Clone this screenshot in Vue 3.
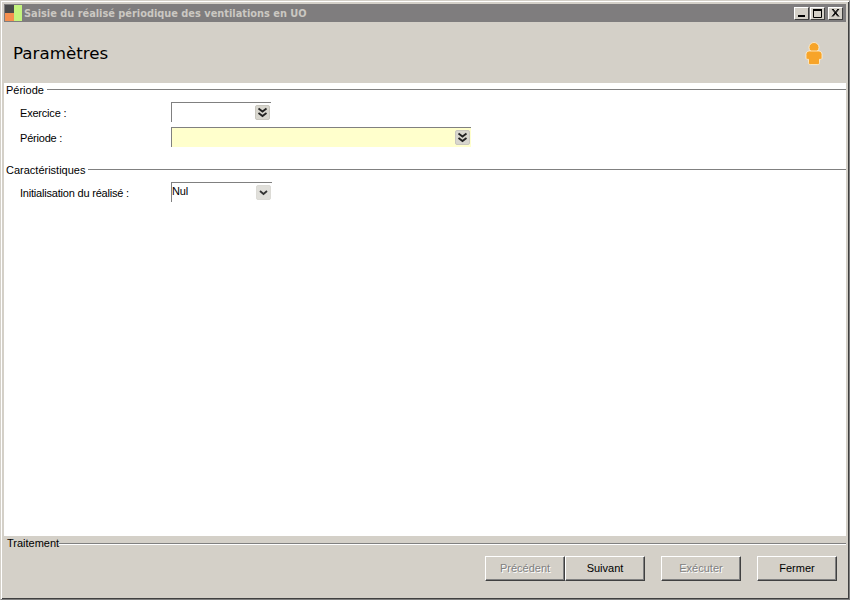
<script setup>
const sections = [
  { title: 'Période', rows: [
    { label: 'Exercice :', w: 100, icon: 'double' },
    { label: 'Période :', w: 300, icon: 'double', req: true },
  ]},
  { title: 'Caractéristiques', rows: [
    { label: 'Initialisation du réalisé :', w: 101, icon: 'single', value: 'Nul' },
  ]},
]
</script>

<template>
  <div class="win">
    <div class="titlebar">
      <svg class="logo" width="17" height="16" viewBox="0 0 17 16">
        <rect x="0" y="0" width="9" height="8" fill="#4a4a4a" />
        <rect x="0" y="8" width="9" height="8" fill="#f58f4f" />
        <rect x="9" y="0" width="8" height="16" fill="#c4f47e" />
      </svg>
      <span class="title">Saisie du réalisé périodique des ventilations en UO</span>
      <div class="ctrls">
        <button class="ctl ctl-min"><svg width="13" height="11" viewBox="0 0 13 11"><rect x="3" y="7" width="7" height="2" fill="#000" /></svg></button>
        <button class="ctl"><svg width="13" height="11" viewBox="0 0 13 11"><path d="M2.500 1.500h8v8h-8z" fill="none" stroke="#000" /><rect x="2" y="1" width="9" height="2" fill="#000" /></svg></button>
        <button class="ctl ctl-x"><svg width="13" height="11" viewBox="0 0 13 11"><path d="M3 1l6 7.500M4 1l6 7.500M9 1l-6 7.500M10 1l-6 7.500" stroke="#000" fill="none" /></svg></button>
      </div>
    </div>

    <div class="header">
      <h1>Paramètres</h1>
      <svg class="person" width="18" height="24" viewBox="0 0 18 24">
        <circle cx="9" cy="5.500" r="5" fill="#f7a429" stroke="#fff3d8" stroke-width="0.8" />
        <path d="M4.200 9h9.600c1.800 0 3.200 1.500 3.200 3.300v3.700c0 .9-.6 1.300-1.500 1.300h-1v3.500c0 1-.7 1.800-1.700 1.800h-7.600c-1 0-1.700-.8-1.700-1.800v-3.500h-1c-.9 0-1.500-.4-1.500-1.300v-3.700c0-1.800 1.400-3.300 3.200-3.300z" fill="#f7a429" stroke="#fff3d8" stroke-width="0.8" />
      </svg>
    </div>

    <div class="content">
      <section v-for="s in sections" :key="s.title" class="section">
        <div class="legend"><span>{{ s.title }}</span><i></i></div>
        <div v-for="r in s.rows" :key="r.label" class="row">
          <label>{{ r.label }}</label>
          <div class="field" :class="{ req: r.req }" :style="{ width: r.w + 'px' }">
            <span class="val">{{ r.value }}</span>
            <span class="drop" :class="{ light: r.icon === 'single' }">
              <svg v-if="r.icon === 'double'" width="11" height="11" viewBox="0 0 11 11"><path d="M1.500 1.500l4 3 4-3M1.500 6l4 3 4-3" fill="none" stroke="#222" stroke-width="1.800" /></svg>
              <svg v-else width="11" height="11" viewBox="0 0 11 11"><path d="M2 4l3.500 3 3.500-3" fill="none" stroke="#333" stroke-width="1.800" /></svg>
            </span>
          </div>
        </div>
      </section>
    </div>

    <div class="footer">
      <div class="legend foot-legend"><span>Traitement</span><i></i></div>
      <div class="actions">
        <div class="pair">
          <button class="btn" disabled>Précédent</button>
          <button class="btn">Suivant</button>
        </div>
        <button class="btn" disabled>Exécuter</button>
        <button class="btn">Fermer</button>
      </div>
    </div>
  </div>
</template>

<style>
html, body { margin: 0; padding: 0; background: #d4d0c8; }
</style>

<style scoped>
.win {
  box-sizing: border-box;
  width: 850px;
  height: 600px;
  background: #d4d0c8;
  border: 1px solid #d4d0c8;
  border-right-color: #808080;
  border-bottom-color: #808080;
  box-shadow: inset 1px 1px 0 #fff, inset -1px -1px 0 #404040;
  padding: 3px 3px 1px 3px;
  display: flex;
  flex-direction: column;
  font-family: "DejaVu Sans", sans-serif;
  color: #000;
  overflow: hidden;
}
.titlebar {
  height: 18px;
  flex: none;
  background: #7f7d7e;
  display: flex;
  align-items: center;
}
.logo { flex: none; margin-left: 1px; }
.title {
  margin-left: 2px;
  font-size: 9.800px;
  font-weight: 700;
  color: #cbc8c2;
  white-space: nowrap;
}
.ctrls { margin-left: auto; display: flex; margin-right: 3px; }
.ctl {
  box-sizing: border-box;
  width: 15px;
  height: 13px;
  padding: 0;
  background: #d4d0c8;
  border: 1px solid;
  border-color: #fff #404040 #404040 #fff;
  display: flex;
  align-items: center;
  justify-content: center;
}
.ctl-min { margin-right: 1px; margin-left: -1px; }
.ctl-x { margin-left: 3px; }
.header {
  height: 61px;
  flex: none;
  display: flex;
  align-items: center;
  justify-content: space-between;
  padding: 2px 23px 0 9px;
  box-sizing: border-box;
}
h1 {
  margin: -2px 0 0;
  font-size: 16.700px;
  font-weight: 400;
}
.content {
  flex: 1;
  background: #fff;
  padding-top: 1px;
}
.section { margin-bottom: 17px; }
.legend {
  display: flex;
  align-items: center;
  height: 11px;
  padding-left: 2px;
  font: 11px "Liberation Sans", sans-serif;
  margin-bottom: 7px;
}
.legend i {
  flex: 1;
  height: 1px;
  background: #808080;
  margin-left: 3px;
}
.row {
  display: flex;
  align-items: center;
  height: 20px;
  padding-left: 16px;
  margin-bottom: 5px;
  font: 11px "Liberation Sans", sans-serif;
  letter-spacing: -0.2px;
}
label { width: 151px; flex: none; padding-top: 2px; }
.field {
  box-sizing: border-box;
  height: 20px;
  border-top: 1px solid #808080;
  border-left: 1px solid #808080;
  display: flex;
  align-items: center;
  justify-content: space-between;
  padding-right: 1px;
}
.req { background: #ffffcc; }
.val { font-size: 11px; margin-top: -3px; }
.drop {
  box-sizing: border-box;
  width: 15px;
  height: 15px;
  border: 1px solid #c8c6be;
  border-radius: 2px;
  background: #d8d6ce;
  display: flex;
  align-items: center;
  justify-content: center;
}
.drop.light { background: #e0dfda; border-color: #dcdbd6; }
.footer {
  height: 62px;
  flex: none;
  box-sizing: border-box;
}
.foot-legend { height: 14px; margin: 0; padding-left: 3px; }
.foot-legend i { margin-left: 0; box-shadow: 0 1px 0 #fff; }
.actions {
  display: flex;
  justify-content: flex-end;
  align-items: center;
  gap: 16px;
  padding: 6px 9px 0 0;
}
.pair { display: flex; }
.btn {
  box-sizing: border-box;
  width: 80px;
  height: 25px;
  padding: 0 0 2px;
  background: #d4d0c8;
  font: 11px "Liberation Sans", sans-serif;
  color: #000;
  border: 1px solid;
  border-color: #fff #404040 #404040 #fff;
  box-shadow: inset -1px -1px 0 #808080;
}
.btn:disabled { color: #808080; text-shadow: 1px 1px 0 #fff; }
</style>
